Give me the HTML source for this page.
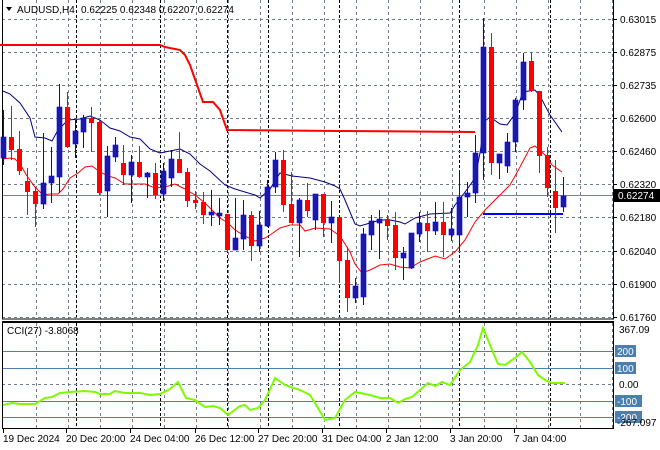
<!DOCTYPE html>
<html><head><meta charset="utf-8">
<style>
html,body{margin:0;padding:0;background:#fff;width:660px;height:450px;overflow:hidden}
svg{display:block;font-family:"Liberation Sans",Arial,sans-serif}
text{font-size:10px;fill:#000}
</style></head><body>
<svg id="s" width="660" height="450" viewBox="0 0 660 450" xmlns="http://www.w3.org/2000/svg">
<rect width="660" height="450" fill="#fff"/>
<g id="grid"></g>
<g id="ind"></g>
<g id="c"></g>
<g id="lab"></g>
</svg>
<script>
var NS="http://www.w3.org/2000/svg";
function el(p,t,a,txt){var e=document.createElementNS(NS,t);for(var k in a)e.setAttribute(k,a[k]);if(txt!=null)e.textContent=txt;document.getElementById(p).appendChild(e);return e;}
for(var x=36;x<613;x+=32){el("grid","line",{x1:x+.5,y1:0,x2:x+.5,y2:319,stroke:"#6f7b8b","stroke-dasharray":"3,3"});el("grid","line",{x1:x+.5,y1:323,x2:x+.5,y2:428,stroke:"#6f7b8b","stroke-dasharray":"3,3"});}
[76,160,227,268,339,459,550].forEach(function(x){el("grid","line",{x1:x+.5,y1:0,x2:x+.5,y2:319,stroke:"#000","stroke-dasharray":"3,2"});el("grid","line",{x1:x+.5,y1:323,x2:x+.5,y2:428,stroke:"#000","stroke-dasharray":"3,2"});});
var ys=[19,52,85,118,151,184,217,251,284,317],pl=["0.63015","0.62875","0.62735","0.62600","0.62460","0.62320","0.62180","0.62040","0.61900","0.61760"];
ys.forEach(function(y,i){el("grid","line",{x1:2,y1:y+.5,x2:613,y2:y+.5,stroke:"#6f7b8b","stroke-dasharray":"3,3"});el("grid","line",{x1:613,y1:y+.5,x2:617,y2:y+.5,stroke:"#000"});el("lab","text",{x:620,y:y+4},pl[i]);});
el("grid","line",{x1:2,y1:195.5,x2:613,y2:195.5,stroke:"#7b838c"});
[[351,"200"],[368,"100"],[401,"-100"],[417,"-200"]].forEach(function(a){el("grid","line",{x1:2,y1:a[0]+.5,x2:613,y2:a[0]+.5,stroke:"#4a7fb0"});});
el("grid","line",{x1:2,y1:384.5,x2:613,y2:384.5,stroke:"#6f7b8b","stroke-dasharray":"3,3"});
el("grid","rect",{x:2.5,y:-1,width:611,height:320,fill:"none",stroke:"#000"});
el("grid","rect",{x:2.5,y:322.5,width:611,height:106,fill:"none",stroke:"#000"});
el("grid","line",{x1:2,y1:321.5,x2:614,y2:321.5,stroke:"#000"});
function pl2(pts,col,w){el("ind","polyline",{points:pts,fill:"none",stroke:col,"stroke-width":w});}
pl2("0,45 160,45 165,47 180,50 185,55 190,65 197,85 203,102 213,102 220,110 227,130 340,131 475,132","#ff0000",2);
pl2("3,91 10,94 20,103 30,118 35,137 45,138 52,141 58,130 68,120 80,119 90,116 100,120 110,128 120,131 130,137 140,139 150,149 160,153 170,151 180,149 190,154 200,164 210,171 225,185 235,189 255,195 260,198 270,189 280,173 292,176 310,178 325,182 335,186 340,189 345,200 355,224 360,226 370,223 380,220 390,220 400,222 405,224 415,218 430,214 450,213 455,205 462,196 468,188 475,178 480,153 485,121 490,117 500,124 507,125 515,114 523,92 535,90 540,96 550,115 562,132","#00007f",1);
pl2("3,159 10,158 15,159 20,164 27,176 35,187 43,195 50,194 58,194 63,189 70,178 78,173 85,167 92,166 100,172 108,176 115,178 125,184 135,184 145,184 155,188 165,187 175,184 185,189 195,195 205,203 212,210 220,218 228,223 235,230 245,236 255,241 265,238 270,235 280,228 290,225 300,225 305,231 315,228 330,229 340,236 350,252 355,264 362,273 370,270 380,265 390,264 400,267 410,268 420,262 435,256 445,259 455,252 465,240 475,222 485,210 500,195 510,185 520,167 530,148 535,146 545,155 552,165 562,172","#ff0000",1);
el("ind","line",{x1:483,y1:214,x2:563,y2:214,stroke:"#0000ff","stroke-width":2});
pl2("3,405 12,403 20,404 35,404 45,398 52,397 60,393 70,392 85,391 95,392 100,394 110,394 115,391 125,393 140,393 150,395 160,394 170,389 178,382 186,398 195,400 205,407 213,406 220,408 228,415 240,406 245,405 250,410 258,408 265,400 272,385 275,378 285,385 300,390 310,395 318,408 325,420 335,418 345,400 355,392 370,395 380,398 390,398 398,403 405,399 412,397 420,390 428,383 435,386 442,382 450,385 460,370 470,362 478,345 483,328 490,345 498,364 505,365 515,358 522,352 530,362 538,375 545,380 552,383 565,383","#7cfc00",2);
var C=[[3,137,158,110,165,'b'],[11,137,150,106,160,'r'],[19,149,171,131,175,'r'],[27,181,192,168,215,'r'],[35,191,204,187,227,'r'],[43,183,204,133,209,'b'],[51,176,183,147,203,'b'],[59,107,177,84,193,'b'],[67,107,147,92,148,'r'],[75,131,144,120,158,'b'],[83,118,132,115,148,'b'],[91,118,123,107,152,'r'],[99,122,193,120,195,'r'],[107,156,191,146,217,'b'],[115,145,157,137,162,'b'],[123,163,175,145,185,'r'],[131,162,175,155,203,'b'],[139,162,177,146,178,'r'],[147,173,177,172,198,'b'],[155,173,195,163,199,'r'],[163,171,194,163,201,'b'],[171,159,178,150,187,'b'],[179,159,173,132,173,'r'],[187,172,201,168,207,'r'],[195,200,203,191,209,'r'],[203,202,215,192,224,'r'],[211,212,215,190,226,'b'],[219,213,216,198,225,'b'],[227,214,250,214,252,'r'],[235,238,250,198,250,'b'],[243,215,239,200,250,'b'],[251,215,246,211,261,'r'],[259,225,246,211,252,'b'],[267,187,226,180,227,'b'],[275,160,187,152,193,'b'],[283,160,205,150,212,'r'],[291,204,223,172,223,'r'],[299,200,223,198,257,'b'],[307,200,211,183,217,'r'],[315,194,220,194,230,'b'],[323,194,223,194,237,'r'],[331,217,223,201,243,'b'],[339,217,261,217,283,'r'],[347,260,298,247,312,'r'],[355,286,298,278,303,'b'],[363,234,297,228,305,'b'],[371,221,235,215,250,'b'],[379,219,223,210,259,'b'],[387,219,226,215,240,'r'],[395,225,258,212,270,'r'],[403,253,258,247,280,'b'],[411,233,268,233,269,'b'],[419,223,234,212,242,'b'],[427,223,231,211,252,'r'],[435,222,231,202,235,'b'],[443,222,235,202,257,'r'],[451,229,235,208,241,'b'],[459,197,235,170,250,'b'],[467,193,197,182,217,'b'],[475,153,193,135,203,'b'],[483,47,153,18,180,'b'],[491,47,163,33,175,'r'],[499,154,163,154,179,'b'],[507,142,166,133,173,'b'],[515,100,142,98,152,'b'],[523,62,100,53,110,'b'],[531,61,91,52,92,'r'],[539,91,156,91,173,'r'],[547,155,188,147,197,'r'],[555,191,208,160,233,'r'],[563,196,207,177,212,'b']];
C.forEach(function(c){var col=c[5]=='b'?'#0000ff':'#ff0000',fill=c[5]=='b'?'#1a1aa6':'#ff0000';
el("c","line",{x1:c[0]+.5,y1:c[3],x2:c[0]+.5,y2:c[4],stroke:col});
el("c","rect",{x:c[0]-2,y:c[1],width:5,height:Math.max(1,c[2]-c[1]),fill:fill,stroke:c[5]=='b'?'#0000ff':'none','stroke-width':c[5]=='b'?0.6:0});});
el("lab","rect",{x:614,y:189,width:46,height:13,fill:"#000"});
el("lab","text",{x:618,y:199,style:"fill:#fff"},"0.62274");
el("lab","polygon",{points:"6,7 12,7 9,11",fill:"#000"});
el("lab","text",{x:17,y:13},"AUDUSD,H4");
el("lab","text",{x:81,y:13},"0.62225 0.62348 0.62207 0.62274");
el("lab","text",{x:7,y:334},"CCI(27) -3.8068");
el("lab","text",{x:619,y:333},"367.09");
[[351,"200"],[368,"100"],[401,"-100"],[417,"-200"]].forEach(function(a){var w=a[1].length*6+3;el("lab","rect",{x:615,y:a[0]-6,width:w,height:12,fill:"#4a7fb0"});el("lab","text",{x:617,y:a[0]+4,style:"fill:#fff"},a[1]);});
el("lab","text",{x:619,y:388},"0.00");
el("lab","text",{x:617,y:426},"-267.097");
[[3,"19 Dec 2024"],[66,"20 Dec 20:00"],[130,"24 Dec 04:00"],[195,"26 Dec 12:00"],[258,"27 Dec 20:00"],[322,"31 Dec 04:00"],[386,"2 Jan 12:00"],[450,"3 Jan 20:00"],[514,"7 Jan 04:00"]].forEach(function(a){el("lab","line",{x1:a[0]+.5,y1:428,x2:a[0]+.5,y2:433,stroke:"#000"});el("lab","text",{x:a[0],y:442},a[1]);});
</script>
</body></html>
